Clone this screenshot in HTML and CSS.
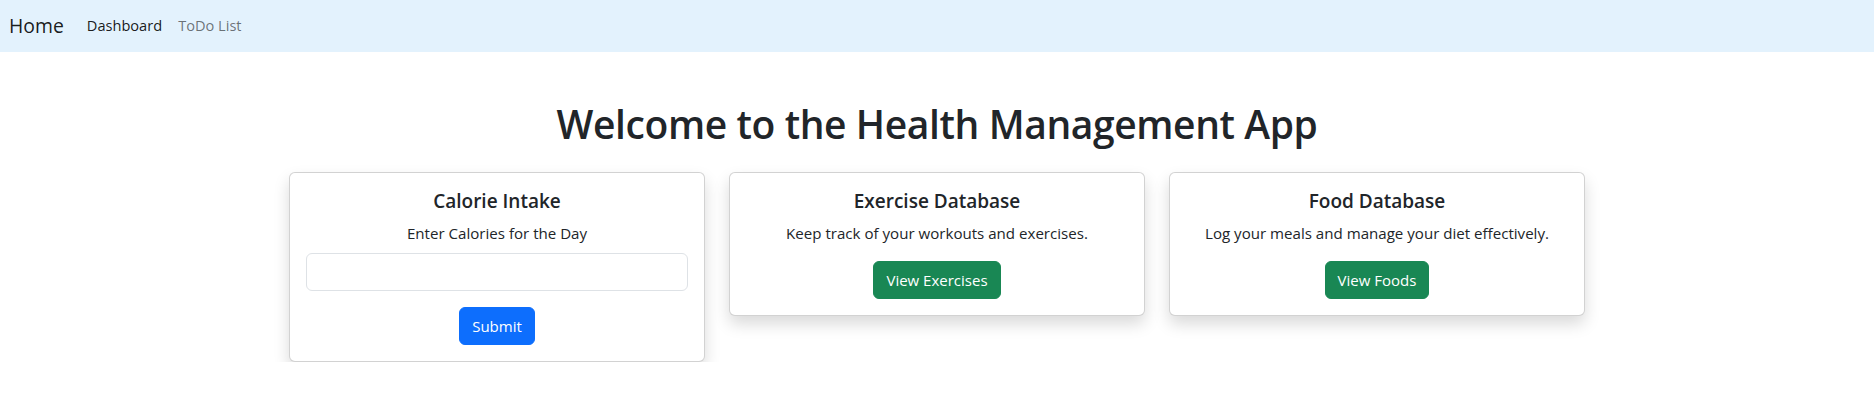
FILE: index.html
```html
<!DOCTYPE html>
<html lang="en">
<head>
<meta charset="utf-8">
<title>Health Management App</title>
<link rel="stylesheet" href="styles.css">
</head>
<body>
<nav class="navbar">
  <a class="brand" href="#">Home</a>
  <ul class="nav-links">
    <li><a class="nav-link active" href="#">Dashboard</a></li>
    <li><a class="nav-link" href="#">ToDo List</a></li>
  </ul>
</nav>
<main class="container">
  <h1 class="page-title">Welcome to the Health Management App</h1>
  <div class="cards">
    <section class="card">
      <h5 class="card-title">Calorie Intake</h5>
      <p class="card-text tight">Enter Calories for the Day</p>
      <form class="calorie-form">
        <input class="form-control" type="number">
        <button class="btn btn-primary" type="button">Submit</button>
      </form>
    </section>
    <section class="card">
      <h5 class="card-title">Exercise Database</h5>
      <p class="card-text">Keep track of your workouts and exercises.</p>
      <a class="btn btn-success" href="#">View Exercises</a>
    </section>
    <section class="card">
      <h5 class="card-title">Food Database</h5>
      <p class="card-text">Log your meals and manage your diet effectively.</p>
      <a class="btn btn-success" href="#">View Foods</a>
    </section>
  </div>
</main>
</body>
</html>
```
FILE: styles.css
```css
* { box-sizing: border-box; }
html, body { margin: 0; padding: 0; }
body {
  font-family: "Open Sans", "Noto Sans", sans-serif;
  font-size: 16px;
  line-height: 1.5;
  color: #212529;
  background: #fff;
}
.navbar {
  background: #e3f2fd;
  height: 52px;
  display: flex;
  align-items: center;
  padding: 0 12px 0 9px;
}
.brand {
  font-size: 19.4px;
  line-height: 30px;
  color: rgba(0,0,0,.9);
  text-decoration: none;
  margin-right: 15px;
}
.nav-links {
  list-style: none;
  margin: 0;
  padding: 0;
  display: flex;
}
.nav-link {
  display: block;
  padding: 8px;
  font-size: 14.6px;
  color: rgba(0,0,0,.55);
  text-decoration: none;
}
.nav-link.active { color: rgba(0,0,0,.9); }
.container {
  width: 1320px;
  margin: 48px auto 0;
  padding: 0 12px;
}
.page-title {
  margin: 0 0 24px;
  text-align: center;
  font-size: 39px;
  font-weight: 600;
  line-height: 48px;
  letter-spacing: -0.4px;
}
.cards {
  display: grid;
  grid-template-columns: repeat(3, 1fr);
  column-gap: 24px;
  align-items: start;
}
.card {
  border: 1px solid rgba(0,0,0,.175);
  border-radius: 6px;
  box-shadow: 0 8px 16px rgba(0,0,0,.15);
  padding: 16px;
  text-align: center;
  background: #fff;
}
.card-title {
  margin: 0 0 8px;
  font-size: 19px;
  font-weight: 600;
  line-height: 24px;
}
.card-text {
  margin: 0 0 16px;
  font-size: 15.1px;
  line-height: 24px;
}
.card-text.tight { margin-bottom: 8px; }
.calorie-form {
  display: flex;
  flex-direction: column;
  align-items: center;
  gap: 16px;
}
.form-control {
  width: 100%;
  height: 38px;
  border: 1px solid #dee2e6;
  border-radius: 6px;
  padding: 6px 12px;
  font: inherit;
}
.btn {
  display: inline-block;
  padding: 6px 12px;
  font-family: inherit;
  font-size: 15px;
  line-height: 24px;
  border: 1px solid transparent;
  border-radius: 6px;
  color: #fff;
  text-decoration: none;
  cursor: pointer;
}
.btn-primary { background: #0d6efd; border-color: #0d6efd; }
.btn-success { background: #198754; border-color: #198754; }
```
